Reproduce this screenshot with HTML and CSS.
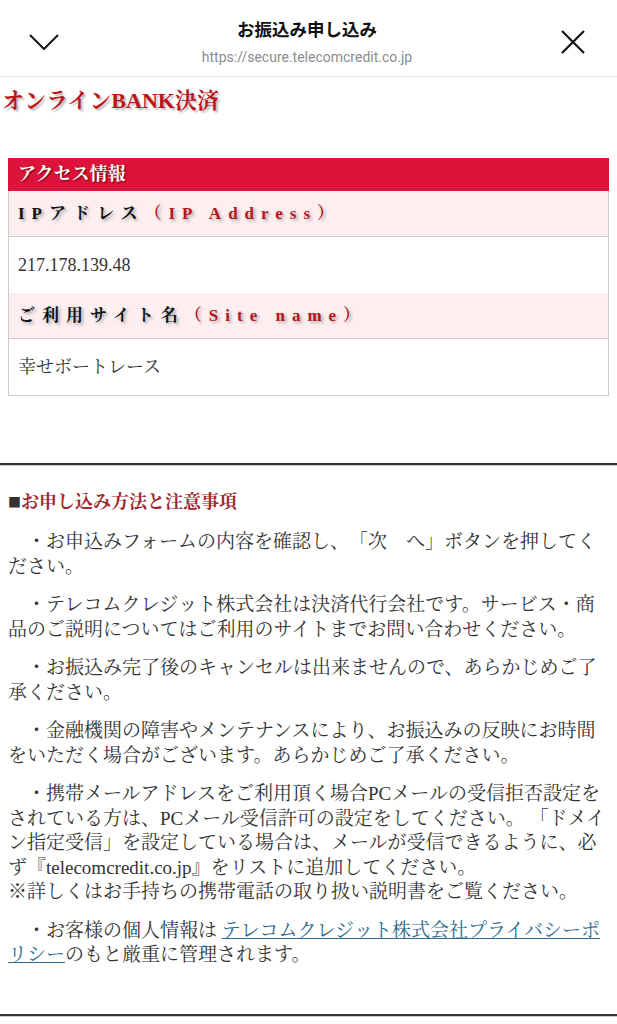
FILE: index.html
```
<!DOCTYPE html>
<html lang="ja">
<head>
  <meta charset="UTF-8">
  <meta name="viewport" content="width=device-width, initial-scale=1">
  <title>お振込み申し込み</title>
  <link rel="stylesheet" href="styles.css">
</head>
<body>

<header class="topbar">
  <svg class="icon-down" width="30" height="16" viewBox="0 0 30 16"><path d="M1 1 L15 15 L29 1" fill="none" stroke="#111" stroke-width="2"/></svg>
  <div class="topbar-title">
    <div class="topbar-name">お振込み申し込み</div>
    <div class="topbar-url">https://secure.telecomcredit.co.jp</div>
  </div>
  <svg class="icon-close" width="24" height="24" viewBox="0 0 24 24"><path d="M1 1 L23 23 M23 1 L1 23" fill="none" stroke="#111" stroke-width="2.2"/></svg>
</header>

<h1 class="page-title">オンラインBANK決済</h1>

<section class="access">
  <h2 class="access-title">アクセス情報</h2>
  <dl class="access-list">
    <dt>IPアドレス<span>（IP Address）</span></dt>
    <dd>217.178.139.48</dd>
    <dt>ご利用サイト名<span>（Site name）</span></dt>
    <dd>幸せボートレース</dd>
  </dl>
</section>

<hr class="rule">

<section class="notes">
  <h3><span class="mark">■</span>お申し込み方法と注意事項</h3>
  <p>　・お申込みフォームの内容を確認し、「次　へ」ボタンを押してください。</p>
  <p>　・テレコムクレジット株式会社は決済代行会社です。サービス・商品のご説明についてはご利用のサイトまでお問い合わせください。</p>
  <p>　・お振込み完了後のキャンセルは出来ませんので、あらかじめご了承ください。</p>
  <p>　・金融機関の障害やメンテナンスにより、お振込みの反映にお時間をいただく場合がございます。あらかじめご了承ください。</p>
  <p>　・携帯メールアドレスをご利用頂く場合PCメールの受信拒否設定をされている方は、PCメール受信許可の設定をしてください。 「ドメイン指定受信」を設定している場合は、メールが受信できるように、必ず『telecomcredit.co.jp』をリストに追加してください。<br>※詳しくはお手持ちの携帯電話の取り扱い説明書をご覧ください。</p>
  <p>　・お客様の個人情報は <a href="#">テレコムクレジット株式会社プライバシーポリシー</a>のもと厳重に管理されます。</p>
</section>

<hr class="rule rule-end">

</body>
</html>
```

FILE: styles.css
```
* { margin: 0; padding: 0; box-sizing: border-box; }
body {
  font-family: "Liberation Serif", "Noto Serif CJK JP", "Noto Sans CJK JP", serif;
  background: #fff;
  color: #333;
  text-spacing-trim: space-all;
}

.topbar {
  display: grid;
  grid-template-columns: 1fr auto 1fr;
  align-items: center;
  height: 77px;
  padding: 8px 32px 0 29px;
  border-bottom: 1px solid #e8e8e8;
  font-family: "Noto Sans CJK JP", sans-serif;
}
.icon-down { justify-self: start; }
.icon-close { justify-self: end; }
.topbar-title { text-align: center; }
.topbar-name { font-size: 17.5px; font-weight: bold; line-height: 22px; color: #111; }
.topbar-url {
  font-family: Roboto, sans-serif;
  font-size: 14px;
  line-height: 18px;
  margin-top: 8px;
  color: #8c8c8c;
}

.page-title {
  margin: 9px 0 0 2px;
  font-size: 22px;
  line-height: 30px;
  color: #bd141c;
  text-shadow: 2px 2px 2px #bbb;
}

.access { margin: 42px 8px 0; }
.access-title {
  background: #dc143c;
  color: #fff;
  font-size: 18px;
  font-weight: bold;
  line-height: 33px;
  padding: 0 10px;
  text-shadow: 1px 1px 2px #600;
}
.access-list { border: 1px solid #ccc; border-top: 0; }
.access-list dt {
  background: #fdeef0;
  border-bottom: 1px solid #ccc;
  padding: 10px 9px;
  font-size: 17px;
  font-weight: bold;
  line-height: 25px;
  letter-spacing: 7px;
  color: #111;
  text-shadow: 2px 2px 3px #aaa;
}
.access-list dt span { color: #b8141c; }
.access-list dd {
  padding: 0 9px;
  font-size: 18px;
  line-height: 56px;
  color: #333;
}

.rule {
  border: 0;
  border-top: 2px solid #333;
  border-bottom: 1px solid #c8c8c8;
  margin-top: 67px;
}
.rule-end { margin-top: 46px; }

.notes { margin: 23px 8px 0; }
.notes h3 {
  font-size: 18px;
  line-height: 25px;
  color: #a2262b;
  margin-bottom: 15px;
}
.notes h3 .mark { color: #333; font-family: "Noto Sans CJK JP", sans-serif; font-size: 13px; vertical-align: 1px; }
.notes p {
  font-size: 19px;
  line-height: 24.5px;
  margin-bottom: 14px;
}
.notes a { color: #2a6a8e; }
```
